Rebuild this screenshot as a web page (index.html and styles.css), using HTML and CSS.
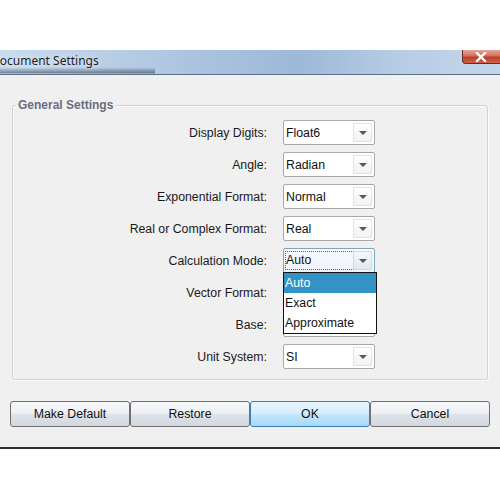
FILE: index.html
```html
<!DOCTYPE html>
<html>
<head>
<meta charset="utf-8">
<link rel="stylesheet" href="styles.css">
</head>
<body>
<div class="topspace"></div>
<div class="window">
  <div class="titlebar">
    <span class="title">Document Settings</span>
    <div class="close"><svg width="12" height="10" viewBox="0 0 12 10"><path d="M2 1 L10 9 M10 1 L2 9" stroke="#fff" stroke-width="2.4" stroke-linecap="square"/></svg></div>
  </div>
  <div class="body">
    <fieldset class="group">
      <legend>General Settings</legend>
      <div class="form">
        <label>Display Digits:</label><div class="combo"><span>Float6</span><i class="arrow"></i></div>
        <label>Angle:</label><div class="combo"><span>Radian</span><i class="arrow"></i></div>
        <label>Exponential Format:</label><div class="combo"><span>Normal</span><i class="arrow"></i></div>
        <label>Real or Complex Format:</label><div class="combo"><span>Real</span><i class="arrow"></i></div>
        <label>Calculation Mode:</label>
        <div class="combo focus"><span>Auto</span><i class="arrow"></i>
          <ul class="popup">
            <li class="sel">Auto</li>
            <li>Exact</li>
            <li>Approximate</li>
          </ul>
        </div>
        <label>Vector Format:</label><div class="combo"><span></span><i class="arrow"></i></div>
        <label>Base:</label><div class="combo"><span></span><i class="arrow"></i></div>
        <label>Unit System:</label><div class="combo"><span>SI</span><i class="arrow"></i></div>
      </div>
    </fieldset>
    <div class="buttons">
      <button class="btn">Make Default</button>
      <button class="btn">Restore</button>
      <button class="btn ok">OK</button>
      <button class="btn">Cancel</button>
    </div>
  </div>
</div>
</body>
</html>
```
FILE: styles.css
```css
html, body {
  margin: 0;
  padding: 0;
  background: #ffffff;
  width: 500px;
  height: 500px;
  overflow: hidden;
  font-family: "Liberation Sans", Arial, sans-serif;
  font-size: 12.3px;
  color: #111;
}
.topspace {
  height: 50px;
}
.window {
  display: flex;
  flex-direction: column;
}
.titlebar {
  position: relative;
  height: 24px;
  border-bottom: 1px solid #5a6f88;
  background:
    linear-gradient(180deg, rgba(255,255,255,0) 0%, rgba(255,255,255,0) 72%, rgba(20,30,45,0.45) 95%, rgba(20,30,45,0) 100%) 0 0 / 155px 100% no-repeat,
    linear-gradient(90deg, #c9dbee 0%, #b9cfe6 20%, #aac3de 40%, #9db9d8 60%, #b7cde5 80%, #c3d6ea 100%);
  display: flex;
  align-items: center;
}
.title {
  font-family: "Noto Sans", "DejaVu Sans", sans-serif;
  font-size: 12px;
  color: #1e1e1e;
  text-indent: -9px;
  padding-bottom: 3px;
  text-shadow: 0 0 6px rgba(255,255,255,0.9);
}
.close {
  position: absolute;
  right: -8px;
  top: 0;
  width: 46px;
  height: 14px;
  border: 1px solid #6e2b22;
  border-top: none;
  border-radius: 0 0 4px 4px;
  background: linear-gradient(180deg, #e8a596 0%, #d2705c 45%, #bd3c25 55%, #d0624a 100%);
  display: flex;
  align-items: center;
  justify-content: flex-start;
  padding-left: 12px;
  box-sizing: border-box;
}
.body {
  height: 374px;
  background: #f0f0f0;
  border-bottom: 2px solid #2a2e36;
  box-sizing: border-box;
  padding: 23px 10px 0 10px;
  display: flex;
  flex-direction: column;
}
.group {
  margin: 0 2px;
  padding: 8px 0 0 0;
  border: 1px solid #d3d3d3;
  border-radius: 3px;
  box-shadow: inset 1px 1px 0 #fafafa, 1px 1px 0 #fafafa;
  height: 282px;
  box-sizing: border-box;
}
.group legend {
  margin-left: 3px;
  padding: 0 2px;
  font-weight: bold;
  color: #6c6c7e;
  font-size: 12px;
}
.form {
  display: grid;
  grid-template-columns: 254px 92px;
  column-gap: 16px;
  row-gap: 7px;
  align-items: center;
}
.form label {
  text-align: right;
  color: #1a1a1a;
}
.combo {
  position: relative;
  height: 25px;
  box-sizing: border-box;
  border: 1px solid #a9a9a9;
  border-radius: 2px;
  background: #ffffff;
  display: flex;
  align-items: center;
  padding-left: 2px;
}
.combo span {
  flex: 1;
  color: #111;
}
.combo .arrow {
  width: 19px;
  height: 19px;
  margin-right: 2px;
  border: 1px solid #e3e3e3;
  border-radius: 1px;
  background: linear-gradient(180deg, #ffffff 0%, #f2f2f2 100%);
  box-sizing: border-box;
  position: relative;
}
.combo .arrow::after {
  content: "";
  position: absolute;
  left: 5px;
  top: 7px;
  border-left: 4px solid transparent;
  border-right: 4px solid transparent;
  border-top: 4px solid #555;
}
.combo.focus {
  border: 1px solid #7aa7c8;
  background: linear-gradient(180deg, #f9fbfd 0%, #eef3f8 100%);
}
.combo.focus span {
  outline: 1px dotted #557;
  outline-offset: 0;
  margin: 2px 0 2px 0;
  line-height: 17px;
}
.combo.focus .arrow {
  border-color: #d0dae4;
  background: linear-gradient(180deg, #f4f8fb 0%, #dfe8f0 100%);
}
.popup {
  position: absolute;
  left: -1px;
  top: 23px;
  width: 94px;
  margin: 0;
  padding: 0;
  list-style: none;
  background: #ffffff;
  border: 1px solid #111;
  box-sizing: border-box;
  z-index: 5;
}
.popup li {
  height: 20px;
  line-height: 20px;
  padding-left: 1px;
  color: #111;
}
.popup li.sel {
  background: #3393c4;
  color: #ffffff;
}
.buttons {
  margin-top: 21px;
  display: flex;
}
.btn {
  width: 120px;
  height: 26px;
  margin: 0;
  font-family: "Liberation Sans", Arial, sans-serif;
  font-size: 12.3px;
  color: #111;
  border: 1px solid #707070;
  border-radius: 3px;
  background: linear-gradient(180deg, #f7f8fa 0%, #eef0f4 45%, #dde1e8 55%, #d3d8e0 100%);
  padding: 0;
}
.btn.ok {
  border-color: #3c7fb1;
  background: linear-gradient(180deg, #e8f6fd 0%, #d7eefb 45%, #bee6fd 55%, #a7d9f5 100%);
}
```
